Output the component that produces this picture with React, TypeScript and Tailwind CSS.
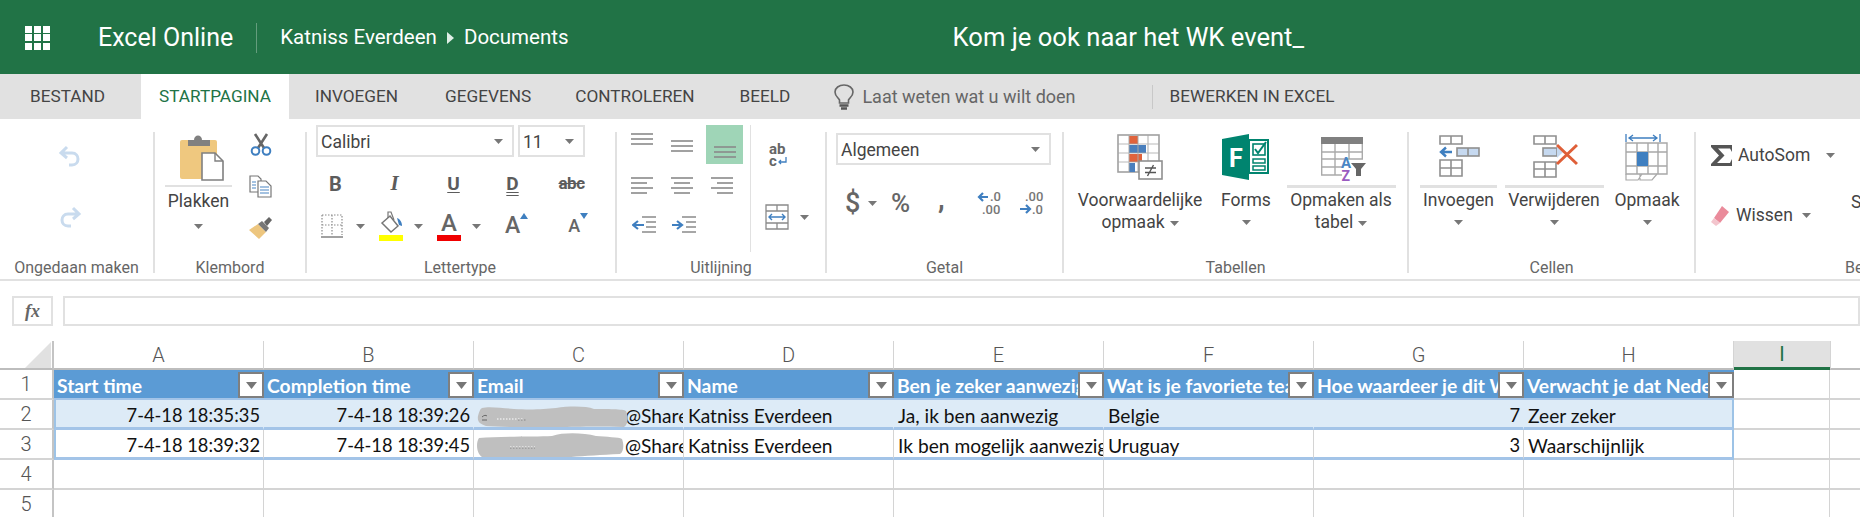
import type { ReactNode } from "react";

const ui = "[font-family:Roboto,sans-serif]";
const cal = "[font-family:Lato,sans-serif]";

function Caret({ className = "" }: { className?: string }) {
  return (
    <svg width="9" height="5" viewBox="0 0 9 5" className={`shrink-0 ${className}`}>
      <path d="M0 0H9L4.5 5Z" fill="#777" />
    </svg>
  );
}

function Separator() {
  return <div className="w-[2px] h-[141px] mt-[13px] bg-[#e1e1e1] shrink-0" />;
}

function Group({ w, label, labelClass = "text-center", children }: { w: string; label: string; labelClass?: string; children: ReactNode }) {
  return (
    <div className={`${w} shrink-0 flex flex-col`}>
      <div className="h-[139px]">{children}</div>
      <div className={`h-[20px] leading-[20px] text-[16px] text-[#666] whitespace-nowrap ${labelClass}`}>{label}</div>
    </div>
  );
}

function Arrow({ flip = false }: { flip?: boolean }) {
  return (
    <svg width="24" height="24" viewBox="0 0 24 24" fill="none" stroke="#c9dbee" strokeWidth="3" className={flip ? "-scale-x-100" : ""}>
      <path d="M9 3L3 9L9 14M3 9H14C18 9 20 12 20 15C20 18 18 21 14 21H11" />
    </svg>
  );
}

function PasteIcon() {
  return (
    <svg width="44" height="48" viewBox="0 0 44 48">
      <rect x="0" y="5" width="37" height="39" rx="2" fill="#efc87f" />
      <path d="M8 5H14C14 -1 22 -1 22 5H30V11H8Z" fill="#808080" />
      <path d="M22 18H35L43 26V45H22Z" fill="#fff" stroke="#808080" strokeWidth="1.6" />
      <path d="M35 18V26H43" fill="none" stroke="#808080" strokeWidth="1.4" />
    </svg>
  );
}

function ScissorsIcon() {
  return (
    <svg width="24" height="26" viewBox="0 0 24 26" fill="none">
      <path d="M6 1L15 15M18 1L9 15" stroke="#666" strokeWidth="2.6" />
      <circle cx="6.5" cy="18" r="3.8" stroke="#3f7fc0" strokeWidth="2" />
      <circle cx="17.5" cy="18" r="3.8" stroke="#3f7fc0" strokeWidth="2" />
    </svg>
  );
}

function CopyIcon() {
  return (
    <svg width="24" height="26" viewBox="0 0 24 26" fill="none">
      <path d="M1 1H9L12 4V17H1Z" fill="#fff" stroke="#777" strokeWidth="1.2" />
      <path d="M9 6H17L22 11V22H9Z" fill="#fff" stroke="#777" strokeWidth="1.2" />
      <path d="M3 7H7M3 10H7M3 13H7M11 12H20M11 15H20M11 18H20" stroke="#4a86c4" strokeWidth="1.2" />
    </svg>
  );
}

function BrushIcon() {
  return (
    <svg width="24" height="24" viewBox="0 0 24 24">
      <path d="M0 13L9 7L17 15L10 22Z" fill="#edc67f" />
      <path d="M9 7L13 4L20 11L17 15Z" fill="#777" />
      <path d="M15 5L20 0L23 3L18 9Z" fill="#666" />
    </svg>
  );
}

function Glyph({ children, className = "" }: { children: ReactNode; className?: string }) {
  return <div className={`w-[59px] h-[42px] flex items-center justify-center text-[#5c5c5c] ${className}`}>{children}</div>;
}

function BorderIcon() {
  return (
    <svg width="22" height="24" viewBox="0 0 22 24" fill="none" stroke="#8a8a8a">
      <path d="M1 1H21V21M1 1V21M11 1V21M1 11H21" strokeDasharray="1.5 1.5" strokeWidth="1.2" />
      <path d="M0 23H22" strokeWidth="1.6" />
    </svg>
  );
}

function FillIcon() {
  return (
    <div className="w-[24px] flex flex-col items-center h-[30px]">
      <svg width="24" height="24" viewBox="0 0 24 24" fill="none">
        <path d="M3 12L11 5L19 15L12 21Z" fill="#fff" stroke="#777" strokeWidth="1.5" />
        <path d="M9 7V1H12L15 9" stroke="#777" strokeWidth="1.2" />
        <path d="M18 7C21 8 23 11 23 15L20 14Z" fill="#3f7fc0" />
      </svg>
      <div className="w-[24px] h-[6px] bg-[#ffff00]" />
    </div>
  );
}

function FontColorIcon() {
  return (
    <div className="w-[24px] flex flex-col items-center h-[30px]">
      <div className="h-[24px] leading-[24px] text-[24px] font-medium text-[#666]">A</div>
      <div className="w-[24px] h-[6px] bg-[#f00000]" />
    </div>
  );
}

function GrowIcon({ down = false }: { down?: boolean }) {
  return (
    <div className="flex items-start">
      <span className={`${down ? "text-[18px]" : "text-[23px]"} font-medium leading-[28px] text-[#666]`}>A</span>
      <svg width="8" height="6" viewBox="0 0 8 6" className="mt-[1px]">
        <path d={down ? "M0 0H8L4 6Z" : "M0 6H8L4 0Z"} fill="#3f7fc0" />
      </svg>
    </div>
  );
}

function AlignLines({ kind }: { kind: "full" | "left" | "center" | "right" }) {
  const short = kind === "left" ? { l: 0, r: 16 } : kind === "center" ? { l: 3, r: 19 } : { l: 6, r: 22 };
  const rows = kind === "full" ? [{ l: 0, r: 22 }, { l: 0, r: 22 }, { l: 0, r: 22 }] : [{ l: 0, r: 22 }, short, { l: 0, r: 22 }, short];
  const h = kind === "full" ? 12 : 17;
  return (
    <svg width="22" height={h} viewBox={`0 0 22 ${h}`} stroke="#8a8a8a" strokeWidth="1.6">
      {rows.map((r, i) => (
        <path key={i} d={`M${r.l} ${1 + i * 5}H${r.r}`} />
      ))}
    </svg>
  );
}

function IndentIcon({ right = false }: { right?: boolean }) {
  return (
    <svg width="24" height="18" viewBox="0 0 24 18" fill="none">
      <path d="M10 1H24M14 6H24M14 11H24M10 16H24" stroke="#8a8a8a" strokeWidth="1.6" />
      <path d={right ? "M0 9H9M5 5L10 9L5 13" : "M12 9H2M6 5L1 9L6 13"} stroke="#3f7fc0" strokeWidth="2.2" />
    </svg>
  );
}

function WrapIcon() {
  return (
    <svg width="22" height="24" viewBox="0 0 22 24">
      <text x="1" y="11" fontFamily="Roboto,sans-serif" fontWeight="700" fontSize="15" fill="#666">ab</text>
      <text x="1" y="23" fontFamily="Roboto,sans-serif" fontWeight="700" fontSize="15" fill="#666">c</text>
      <path d="M18 14V19H11M13 17L11 19L13 21" fill="none" stroke="#3f7fc0" strokeWidth="1.3" />
    </svg>
  );
}

function MergeIcon() {
  return (
    <svg width="24" height="26" viewBox="0 0 24 26" fill="none">
      <path d="M1 1H23V25H1ZM1 7H23M1 19H23M12 1V7M12 19V25" stroke="#8a8a8a" strokeWidth="1.3" />
      <path d="M4 13H20M7 10L4 13L7 16M17 10L20 13L17 16" stroke="#3f7fc0" strokeWidth="1.4" />
    </svg>
  );
}

function DecimalIcon({ more = false }: { more?: boolean }) {
  return (
    <svg width="26" height="26" viewBox="0 0 26 26">
      <path d={more ? "M1 19H11M7 15L11 19L7 23" : "M11 7H2M6 3L2 7L6 11"} fill="none" stroke="#3f7fc0" strokeWidth="2.2" />
      <text x={more ? 6 : 13} y="11" fontFamily="Roboto,sans-serif" fontSize="13" fontWeight="500" fill="#777">{more ? ".00" : ".0"}</text>
      <text x={more ? 13 : 5} y="24" fontFamily="Roboto,sans-serif" fontSize="13" fontWeight="500" fill="#777">{more ? ".0" : ".00"}</text>
    </svg>
  );
}

function CondIcon() {
  return (
    <svg width="46" height="46" viewBox="0 0 46 46" fill="none">
      <rect x="1" y="1" width="41" height="37" fill="#fff" stroke="#a0a0a0" strokeWidth="1.6" />
      <rect x="12" y="2" width="9" height="8" fill="#e0633c" />
      <rect x="12" y="11" width="17" height="8" fill="#4a7fbd" />
      <rect x="12" y="20" width="13" height="8" fill="#e0633c" />
      <rect x="12" y="29" width="6" height="9" fill="#4a7fbd" />
      <path d="M1 10H42M1 19H42M1 28H42M12 1V38M21 1V38M31 1V38" stroke="#a8a8a8" strokeWidth="1.2" opacity="0.8" />
      <rect x="22" y="27" width="23" height="18" fill="#fff" stroke="#8f8f8f" strokeWidth="1.6" />
      <path d="M28 34H39M28 38.5H39M36.5 31L30.5 42" stroke="#555" strokeWidth="1.4" />
    </svg>
  );
}

function FormsIcon() {
  return (
    <svg width="48" height="46" viewBox="0 0 48 46">
      <path d="M0 5L27 0V46L0 41Z" fill="#00846f" />
      <text x="7" y="33" fontFamily="Roboto,sans-serif" fontWeight="700" fontSize="25" fill="#fff">F</text>
      <rect x="27" y="6" width="19" height="33" fill="#fff" stroke="#00846f" strokeWidth="2" />
      <rect x="31" y="10" width="12" height="11" fill="#fff" stroke="#00846f" strokeWidth="1.6" />
      <path d="M33 15L36 19L44 8" fill="none" stroke="#00846f" strokeWidth="2" />
      <rect x="31" y="25" width="12" height="4" fill="#fff" stroke="#00846f" strokeWidth="1.5" />
      <rect x="31" y="32" width="12" height="4" fill="#fff" stroke="#00846f" strokeWidth="1.5" />
    </svg>
  );
}

function TableIcon() {
  return (
    <svg width="50" height="48" viewBox="0 0 50 48" fill="none">
      <rect x="5" y="3" width="42" height="7" fill="#808080" />
      <path d="M5.7 10V41H26M5 18H47M5 25H47M5 33H26M19 10V41M33 10V25M46.3 10V25" stroke="#aaa" strokeWidth="1.4" />
      <text x="25" y="34" fontFamily="Roboto,sans-serif" fontWeight="700" fontSize="15" fill="#4a86c4">A</text>
      <text x="25.5" y="47" fontFamily="Roboto,sans-serif" fontWeight="700" fontSize="14" fill="#9a5bc0">Z</text>
      <path d="M35 29H50L45 35V42H40V35Z" fill="#666" />
    </svg>
  );
}

function InsertIcon() {
  return (
    <svg width="42" height="44" viewBox="0 0 42 44" fill="none">
      <path d="M2 2H24V10H2ZM13 2V10" stroke="#8f8f8f" strokeWidth="1.6" />
      <rect x="19" y="14" width="22" height="8" fill="#c6d9f0" stroke="#8f8f8f" strokeWidth="1.6" />
      <path d="M30 14V22" stroke="#8f8f8f" strokeWidth="1.6" />
      <path d="M14 18H4M8 13.5L3 18L8 22.5" stroke="#3f7fc0" strokeWidth="2.4" />
      <path d="M2 26H24V42H2ZM13 26V42M2 34H24" stroke="#8f8f8f" strokeWidth="1.6" />
    </svg>
  );
}

function DeleteIcon() {
  return (
    <svg width="48" height="44" viewBox="0 0 48 44" fill="none">
      <path d="M4 2H26V10H4ZM15 2V10" stroke="#8f8f8f" strokeWidth="1.6" />
      <rect x="13" y="14" width="14" height="8" fill="#c6d9f0" stroke="#8f8f8f" strokeWidth="1.6" />
      <path d="M27 12L33 18L27 24Z" fill="#c6d9f0" />
      <path d="M4 28H26V43H4ZM15 28V43M4 35H26" stroke="#8f8f8f" strokeWidth="1.6" />
      <path d="M27 11L47 30M47 11L27 30" stroke="#df5f38" strokeWidth="3" />
    </svg>
  );
}

function FormatIcon() {
  return (
    <svg width="44" height="48" viewBox="0 0 44 48" fill="none">
      <path d="M1 0V8M35 0V8M4 4H32M8 1L4 4L8 7M28 1L32 4L28 7" stroke="#3f7fc0" strokeWidth="1.3" />
      <path d="M1 9H42V40H1ZM1 18H42M1 32H42M12 9V40M23 9V40M33 9V40" stroke="#a8a8a8" strokeWidth="1.4" />
      <rect x="12" y="18" width="11" height="14" fill="#3f7fc0" />
      <path d="M1 40V46H13L17 40M15 40V46H27L32 40" stroke="#a8a8a8" strokeWidth="1.2" />
    </svg>
  );
}

function SigmaIcon() {
  return (
    <svg width="23" height="24" viewBox="0 0 23 24">
      <path d="M1 2H22V9L20 5.5H8L14.5 12.5L7 20H20L22 16V23H1V21L9 12.5L1 4Z" fill="#555" />
    </svg>
  );
}

function EraserIcon() {
  return (
    <svg width="20" height="24" viewBox="0 0 20 24">
      <path d="M12 3L19 9L10 20L4 15Z" fill="#ea8b9b" />
      <path d="M4 15L10 20L6 23L1 19Z" fill="#f3c5cd" />
    </svg>
  );
}

function BulbIcon() {
  return (
    <svg width="22" height="26" viewBox="0 0 22 26" fill="none" className="shrink-0">
      <path d="M6.5 16C5 13.5 2 12 2 8C2 4 6 1 11 1C16 1 20 4 20 8C20 12 17 13.5 15.5 16V19H6.5Z" stroke="#666" strokeWidth="1.6" />
      <path d="M6.5 21.5H15.5M8 24.5H14" stroke="#555" strokeWidth="2.6" />
    </svg>
  );
}

function Select({ w, label }: { w: string; label: string }) {
  return (
    <div className={`${w} h-[32px] border-2 border-[#e1e1e1] flex items-center justify-between pl-[3px] pr-[9px] shrink-0`}>
      <span className="text-[17.5px] text-[#444] pt-[2px]">{label}</span>
      <Caret />
    </div>
  );
}

function BigButton({ w, icon, lines, dw, caret = "inline" }: { w: string; icon: ReactNode; lines: string[]; dw?: string; caret?: "inline" | "below" }) {
  return (
    <div className={`${w} shrink-0 flex flex-col items-center pt-[15px] text-[17.5px] text-[#444]`}>
      <div className="h-[48px] flex items-start justify-center">{icon}</div>
      <div className={`h-[3px] mt-[3px] ${dw ?? ""} ${dw ? "bg-[#e1e1e1]" : ""} shrink-0`} />
      <div className="leading-[22px] mt-[1px] text-center whitespace-nowrap">{lines[0]}</div>
      {caret === "below" ? (
        <div className="h-[22px] flex items-center"><Caret /></div>
      ) : (
        <div className="leading-[22px] whitespace-nowrap flex items-center gap-[5px]">
          {lines[1]}
          <Caret className="mt-[2px]" />
        </div>
      )}
    </div>
  );
}

const Ribbon = () => (
  <div className={`h-[162px] bg-white border-b-2 border-[#e1e1e1] flex overflow-hidden ${ui}`}>
    <Group w="w-[153px]" label="Ongedaan maken">
      <div className="flex flex-col items-center pr-[13px] pt-[25px] gap-[37px]">
        <Arrow />
        <Arrow flip />
      </div>
    </Group>
    <Separator />
    <Group w="w-[150px]" label="Klembord">
      <div className="flex pl-[10px] pt-[14px]">
        <div className="w-[67px] flex flex-col items-center">
          <div className="h-[48px] pl-[6px] pt-[2px]"><PasteIcon /></div>
          <div className="w-[67px] h-[2px] bg-[#e1e1e1] mt-[4px]" />
          <div className="text-[17.5px] text-[#444] leading-[22px] mt-[3px]">Plakken</div>
          <Caret className="mt-[12px]" />
        </div>
        <div className="ml-[17px] flex flex-col gap-[16px]">
          <ScissorsIcon />
          <CopyIcon />
          <BrushIcon />
        </div>
      </div>
    </Group>
    <Separator />
    <Group w="w-[308px]" label="Lettertype" labelClass="text-center pr-[2px]">
      <div className="flex gap-[4px] pl-[9px] pt-[6px]">
        <Select w="w-[198px]" label="Calibri" />
        <Select w="w-[67px]" label="11" />
      </div>
      <div className="flex mt-[6px] -ml-[1px]">
        <Glyph className="text-[20px] font-bold">B</Glyph>
        <Glyph className="text-[21px] font-bold italic [font-family:'Liberation_Serif',serif]">I</Glyph>
        <Glyph className="text-[19px] font-bold underline underline-offset-2">U</Glyph>
        <Glyph className="text-[19px] font-bold underline decoration-double underline-offset-2">D</Glyph>
        <Glyph className="text-[17px] font-bold line-through tracking-[-0.5px]">abc</Glyph>
      </div>
      <div className="flex items-center h-[42px] pl-[14px]">
        <BorderIcon />
        <Caret className="ml-[13px]" />
        <div className="ml-[14px]"><FillIcon /></div>
        <Caret className="ml-[11px]" />
        <div className="ml-[14px]"><FontColorIcon /></div>
        <Caret className="ml-[11px]" />
        <div className="ml-[24px]"><GrowIcon /></div>
        <div className="ml-[40px]"><GrowIcon down /></div>
      </div>
    </Group>
    <Separator />
    <Group w="w-[208px]" label="Uitlijning">
      <div className="flex">
        <div className="w-[133px] shrink-0 pl-[5px] pt-[6px]">
          <div className="flex h-[39px]">
            <div className="w-[40px] flex justify-center pt-[8px]"><AlignLines kind="full" /></div>
            <div className="w-[40px] flex justify-center pt-[15px]"><AlignLines kind="full" /></div>
            <div className="w-[37px] ml-[4px] bg-[#9fd5b7] flex justify-center pt-[21px]"><AlignLines kind="full" /></div>
          </div>
          <div className="flex h-[42px] items-center">
            <div className="w-[40px] flex justify-center"><AlignLines kind="left" /></div>
            <div className="w-[40px] flex justify-center"><AlignLines kind="center" /></div>
            <div className="w-[40px] flex justify-center"><AlignLines kind="right" /></div>
          </div>
          <div className="flex h-[38px] items-center">
            <div className="w-[44px] flex justify-center"><IndentIcon /></div>
            <div className="w-[36px] flex justify-center"><IndentIcon right /></div>
          </div>
        </div>
        <div className="w-[1px] h-[127px] mt-[6px] bg-[#e1e1e1] shrink-0" />
        <div className="flex flex-col pt-[24px] pl-[17px]">
          <WrapIcon />
          <div className="flex items-center mt-[37px] -ml-[3px]">
            <MergeIcon />
            <Caret className="ml-[11px]" />
          </div>
        </div>
      </div>
    </Group>
    <Separator />
    <Group w="w-[235px]" label="Getal">
      <div className="pl-[9px] pt-[14px]">
        <Select w="w-[215px]" label="Algemeen" />
      </div>
      <div className="flex items-center h-[40px] mt-[18px] pl-[18px] text-[#666]">
        <span className="text-[27px] font-medium w-[16px]">$</span>
        <Caret className="ml-[7px]" />
        <span className="text-[26px] font-medium ml-[14px] w-[24px]">%</span>
        <span className="text-[27px] ml-[23px] w-[12px] font-bold leading-none -mt-[8px]">,</span>
        <div className="ml-[27px]"><DecimalIcon /></div>
        <div className="ml-[16px]"><DecimalIcon more /></div>
      </div>
    </Group>
    <Separator />
    <Group w="w-[343px]" label="Tabellen">
      <div className="flex">
        <BigButton w="w-[152px]" icon={<CondIcon />} lines={["Voorwaardelijke", "opmaak"]} />
        <BigButton w="w-[60px]" icon={<FormsIcon />} lines={["Forms"]} caret="below" />
        <BigButton w="w-[130px]" icon={<TableIcon />} lines={["Opmaken als", "tabel"]} dw="w-[109px]" />
      </div>
    </Group>
    <Separator />
    <Group w="w-[285px]" label="Cellen">
      <div className="flex">
        <BigButton w="w-[99px]" icon={<InsertIcon />} lines={["Invoegen"]} caret="below" dw="w-[77px]" />
        <BigButton w="w-[92px]" icon={<DeleteIcon />} lines={["Verwijderen"]} caret="below" dw="w-[99px]" />
        <BigButton w="w-[94px]" icon={<FormatIcon />} lines={["Opmaak"]} caret="below" />
      </div>
    </Group>
    <Separator />
    <Group w="w-[170px]" label="Bewerken" labelClass="pl-[149px]">
      <div className="flex text-[17.5px] text-[#444]">
        <div className="w-[155px] shrink-0 pl-[14px] pt-[24px] flex flex-col gap-[36px]">
          <div className="flex items-center h-[24px]">
            <SigmaIcon />
            <span className="ml-[5px] whitespace-nowrap">AutoSom</span>
            <Caret className="ml-[16px]" />
          </div>
          <div className="flex items-center h-[24px]">
            <EraserIcon />
            <span className="ml-[6px]">Wissen</span>
            <Caret className="ml-[9px]" />
          </div>
        </div>
        <div className="pt-[70px]">Sorteren</div>
      </div>
    </Group>
  </div>
);

const letters = ["A", "B", "C", "D", "E", "F", "G", "H"];
const headers = ["Start time", "Completion time", "Email", "Name", "Ben je zeker aanwezig?", "Wat is je favoriete team?", "Hoe waardeer je dit WK event?", "Verwacht je dat Nederland wint?"];

type Row = { a: string; b: string; e: string; f: string; g: string; h: string };
const rows: Row[] = [
  { a: "7-4-18 18:35:35", b: "7-4-18 18:39:26", e: "Ja, ik ben aanwezig", f: "Belgie", g: "7", h: "Zeer zeker" },
  { a: "7-4-18 18:39:32", b: "7-4-18 18:39:45", e: "Ik ben mogelijk aanwezig", f: "Uruguay", g: "3", h: "Waarschijnlijk" },
];

function RowNum({ n }: { n: number }) {
  return (
    <div className={`h-[30px] border-b-2 border-[#d4d4d4] border-r-2 border-r-[#c4c4c4] flex items-center justify-center text-[20px] font-light text-[#555] ${ui}`}>{n}</div>
  );
}

function DataCell({ tone, children, right = false, first = false, last = false, small = false, extra }: { tone: "a" | "b"; children?: ReactNode; right?: boolean; first?: boolean; last?: boolean; small?: boolean; extra?: ReactNode }) {
  const bg = tone === "a" ? "bg-[#ddebf7]" : "bg-white";
  const rb = last ? "border-r-2 border-r-[#9dc3e6]" : tone === "a" ? "border-r border-r-[#ddebf7]" : "border-r border-r-[#d4d4d4]";
  return (
    <div className={`relative h-[30px] overflow-hidden whitespace-nowrap flex items-center pt-[5px] border-b-[3px] border-b-[#a3c4e8] ${small ? "text-[18.3px]" : "text-[19.2px]"} text-[#111] ${cal} ${bg} ${rb} ${first ? "border-l-2 border-l-[#9dc3e6]" : ""} ${right ? "justify-end pr-[3px]" : "pl-[4px]"}`}>
      {children}
      {extra}
    </div>
  );
}

function Blob({ second = false }: { second?: boolean }) {
  return (
    <svg width="156" height="30" viewBox="0 0 156 30" className="absolute left-0 top-0">
      {second ? (
        <>
          <path d="M5 8C25 6 60 7 78 6C90 2 110 3 122 6C132 7 145 7 148 9C150 14 150 22 146 24C120 25 100 27 82 28C50 28 25 28 8 27C2 23 2 12 5 8Z" fill="#bfbfbf" />
          <path d="M36 17H61" stroke="#fff" strokeWidth="1" strokeDasharray="1.5 1.5" />
          <path d="M36 18H61" stroke="#777" strokeWidth="0.8" strokeDasharray="1.5 1.5" />
        </>
      ) : (
        <>
          <path d="M8 8C14 6 30 8 40 9C60 10 70 9 82 8C96 6 112 6 120 9C132 9 150 9 152 11C154 16 155 24 150 27C120 26 100 27 85 27C60 28 30 27 12 26C6 24 3 22 4 16C5 12 6 9 8 8Z" fill="#bfbfbf" />
          <path d="M8 17C10 15 12 15 13 16M8 20H13" stroke="#666" strokeWidth="1" fill="none" />
          <path d="M23 19H50" stroke="#fff" strokeWidth="1" strokeDasharray="1.5 1.5" />
          <path d="M44 20H52" stroke="#777" strokeWidth="0.8" strokeDasharray="1.5 1.5" />
        </>
      )}
    </svg>
  );
}

function Sheet() {
  return (
    <div className="grid grid-cols-[54px_repeat(8,210px)_96px_1fr]">
      <div className="h-[29px] border-r-2 border-[#c4c4c4] border-b-2 border-b-[#bdbdbd] relative">
        <svg width="26" height="26" viewBox="0 0 26 26" className="absolute right-[1px] bottom-0"><path d="M26 0V26H0Z" fill="#e1e1e1" /></svg>
      </div>
      {letters.map((l) => (
        <div key={l} className={`h-[29px] border-r border-[#d4d4d4] border-b-2 border-b-[#bdbdbd] flex items-center justify-center text-[20px] font-light text-[#555] ${ui}`}>{l}</div>
      ))}
      <div className={`h-[29px] bg-[#e1e1e1] border-b-[3px] border-[#217346] flex items-center justify-center text-[20px] text-[#217346] ${ui}`}>I</div>
      <div className="h-[29px] border-b-2 border-[#bdbdbd] border-l border-l-[#d4d4d4]" />

      <RowNum n={1} />
      {headers.map((h) => (
        <div key={h} className={`h-[30px] bg-[#5b9bd5] border-b-2 border-b-[#a3c4e8] flex items-stretch pt-[2px] ${cal}`}>
          <div className="flex-1 min-w-0 overflow-hidden whitespace-nowrap pl-[3px] text-white font-bold text-[19.3px] leading-[27px]">{h}</div>
          <div className="w-[26px] h-[26px] bg-white border-2 border-[#7f7f7f] flex items-center justify-center shrink-0">
            <svg width="11" height="7" viewBox="0 0 11 7"><path d="M0 0H11L5.5 7Z" fill="#767676" /></svg>
          </div>
        </div>
      ))}
      <div className="h-[30px] border-r border-[#d4d4d4] border-b-2 border-b-[#d4d4d4]" />
      <div className="h-[30px] border-b-2 border-[#d4d4d4]" />

      {rows.map((r, i) => {
        const tone = i === 0 ? "a" : "b";
        return [
          <RowNum key={`n${i}`} n={i + 2} />,
          <DataCell key={`a${i}`} tone={tone} right first small>{r.a}</DataCell>,
          <DataCell key={`b${i}`} tone={tone} right small>{r.b}</DataCell>,
          <DataCell key={`c${i}`} tone={tone} extra={<Blob second={i === 1} />}><span className="pl-[147px]">@SharePoint.nl</span></DataCell>,
          <DataCell key={`d${i}`} tone={tone}>Katniss Everdeen</DataCell>,
          <DataCell key={`e${i}`} tone={tone}>{r.e}</DataCell>,
          <DataCell key={`f${i}`} tone={tone}>{r.f}</DataCell>,
          <DataCell key={`g${i}`} tone={tone} right small>{r.g}</DataCell>,
          <DataCell key={`h${i}`} tone={tone} last>{r.h}</DataCell>,
          <div key={`i${i}`} className="h-[30px] border-r border-[#d4d4d4] border-b-2 border-b-[#d4d4d4]" />,
          <div key={`j${i}`} className="h-[30px] border-b-2 border-[#d4d4d4]" />,
        ];
      })}

      {[4, 5].map((n) => [
        <RowNum key={`n${n}`} n={n} />,
        ...[...letters, "I"].map((l) => <div key={`${l}${n}`} className="h-[30px] border-r border-[#d4d4d4] border-b-2 border-b-[#d4d4d4]" />),
        <div key={`j${n}`} className="h-[30px] border-b-2 border-[#d4d4d4]" />,
      ])}
    </div>
  );
}

const tabs = [
  { t: "INVOEGEN", cls: "ml-[26px]" },
  { t: "GEGEVENS", cls: "ml-[47px]" },
  { t: "CONTROLEREN", cls: "ml-[44px]" },
  { t: "BEELD", cls: "ml-[45px]" },
];

export default function App() {
  return (
    <div className={`w-[1860px] h-[517px] overflow-hidden bg-white ${ui}`}>
      <header className="h-[74px] bg-[#217346] text-white flex items-center whitespace-nowrap pt-[1px]">
        <div className="ml-[25px] grid grid-cols-3 gap-[1.5px] w-[25px]">
          {Array.from({ length: 9 }).map((_, i) => (
            <span key={i} className="w-[7px] h-[7px] bg-white" />
          ))}
        </div>
        <div className="ml-[48px] text-[25px]">Excel Online</div>
        <div className="ml-[23px] w-[1px] h-[30px] bg-white/30" />
        <div className="ml-[23px] text-[20.5px]">Katniss Everdeen</div>
        <svg width="7" height="12" viewBox="0 0 7 12" className="ml-[10px]"><path d="M0 0L7 6L0 12Z" fill="#dfeee6" /></svg>
        <div className="ml-[10px] text-[20.5px]">Documents</div>
        <div className="ml-[384px] text-[25.6px]">Kom je ook naar het WK event_</div>
      </header>
      <nav className="h-[45px] bg-[#e1e1e1] flex items-center text-[17.2px] text-[#444] whitespace-nowrap">
        <div className="pl-[30px] w-[141px]">BESTAND</div>
        <div className="w-[148px] h-full bg-white text-[#217346] flex items-center justify-center">STARTPAGINA</div>
        {tabs.map((t) => (
          <div key={t.t} className={t.cls}>{t.t}</div>
        ))}
        <div className="ml-[43px]"><BulbIcon /></div>
        <div className="ml-[7px] text-[18px] text-[#666]">Laat weten wat u wilt doen</div>
        <div className="ml-[76px] w-[1px] h-[24px] bg-[#c8c8c8]" />
        <div className="ml-[17px]">BEWERKEN IN EXCEL</div>
      </nav>
      <Ribbon />
      <div className="flex gap-[10px] pl-[12px] mt-[15px] h-[30px]">
        <div className="w-[41px] h-[30px] border-2 border-[#e1e1e1] flex items-center justify-center text-[18px] font-bold italic text-[#666] [font-family:'Liberation_Serif',serif]">fx</div>
        <div className="flex-1 h-[30px] border-2 border-[#e1e1e1]" />
      </div>
      <div className="mt-[15px]">
        <Sheet />
      </div>
    </div>
  );
}
